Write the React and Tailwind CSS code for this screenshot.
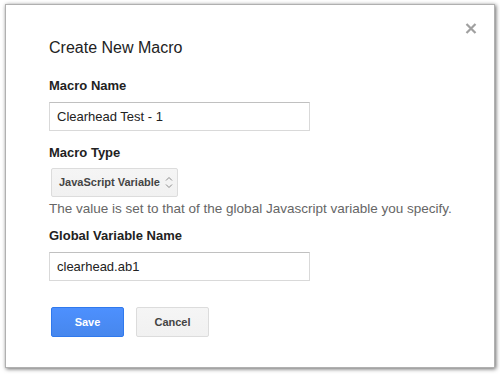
export default function App() {
  const font = { fontFamily: '"Liberation Sans", Arial, sans-serif' };
  return (
    <div className="w-[500px] h-[374px] bg-white pt-[4px] pl-[5px]" style={font}>
      <div className="relative w-[490px] h-[364px] bg-white border border-[#b0b0b0] shadow-[1px_1px_4px_rgba(0,0,0,0.6)] pl-[43px] pt-[33px]">
        <button className="absolute left-[459px] top-[17px] w-[12px] h-[12px] flex items-center justify-center">
          <svg width="12" height="11" viewBox="0 0 12 11">
            <path d="M1.5 1 L10.5 10 M10.5 1 L1.5 10" stroke="#a0a0a0" strokeWidth="2.2" strokeLinecap="butt" />
          </svg>
        </button>
        <div className="text-[16px] leading-[20px] text-[#222]">Create New Macro</div>
        <div className="mt-[20px] text-[13px] leading-[16px] font-bold text-[#222]">Macro Name</div>
        <div className="mt-[8px] w-[261px] h-[29px] border border-[#d9d9d9] border-t-[#c0c0c0] flex items-center pl-[7px] text-[13px] text-[#222]">
          Clearhead Test - 1
        </div>
        <div className="mt-[14px] text-[13px] leading-[16px] font-bold text-[#222]">Macro Type</div>
        <div className="mt-[7px] ml-[2px] w-[127px] h-[29px] rounded-[2px] border border-[#dcdcdc] bg-gradient-to-b from-[#f5f5f5] to-[#f1f1f1] flex items-center pl-[7px] text-[11px] font-bold text-[#444]">
          <span>JavaScript Variable</span>
          <svg className="ml-[5px]" width="8" height="13" viewBox="0 0 8 13">
            <path d="M1 4.5 L4 1.5 L7 4.5 M1 8.5 L4 11.5 L7 8.5" fill="none" stroke="#8a8a8a" strokeWidth="1" />
          </svg>
        </div>
        <div className="mt-[4px] text-[13.5px] leading-[16px] text-[#666]">
          The value is set to that of the global Javascript variable you specify.
        </div>
        <div className="mt-[11px] text-[13px] leading-[16px] font-bold text-[#222]">Global Variable Name</div>
        <div className="mt-[8px] w-[261px] h-[29px] border border-[#d9d9d9] border-t-[#c0c0c0] flex items-center pl-[7px] text-[13px] text-[#222]">
          clearhead.ab1
        </div>
        <div className="mt-[26px] ml-[2px] flex gap-[12px]">
          <button className="w-[73px] h-[30px] rounded-[2px] border border-[#3079ed] bg-gradient-to-b from-[#4d90fe] to-[#4787ed] text-white text-[11px] font-bold">
            Save
          </button>
          <button className="w-[73px] h-[30px] rounded-[2px] border border-[#dcdcdc] bg-gradient-to-b from-[#f5f5f5] to-[#f1f1f1] text-[#444] text-[11px] font-bold">
            Cancel
          </button>
        </div>
      </div>
    </div>
  );
}
